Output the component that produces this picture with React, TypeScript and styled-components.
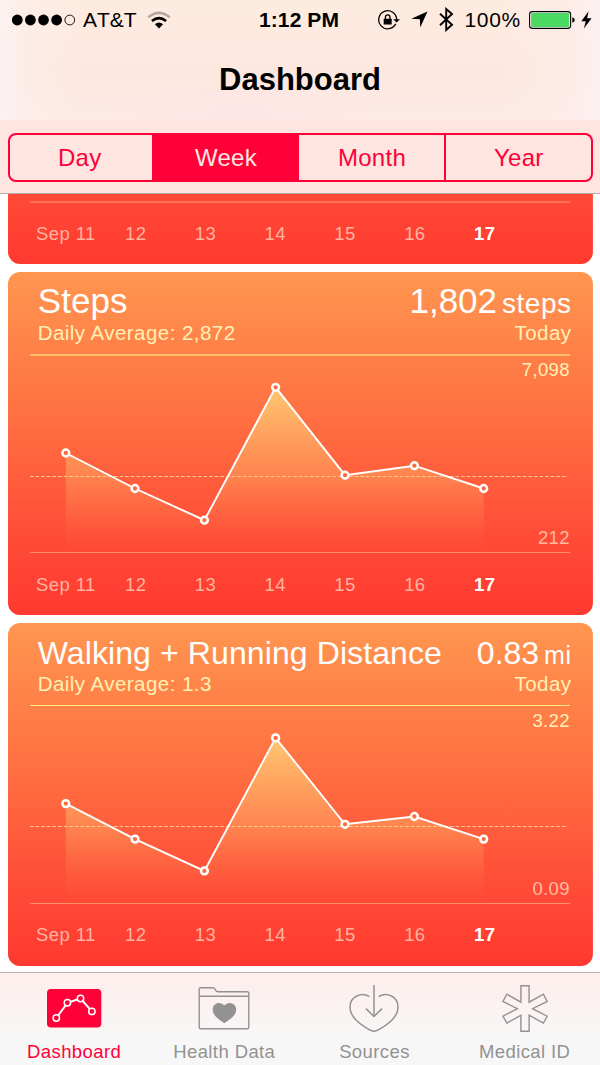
import React from 'react';
import styled, { createGlobalStyle } from 'styled-components';

const GlobalStyle = createGlobalStyle`
  * { box-sizing: border-box; }
  html, body { margin: 0; padding: 0; background: #fff; }
  body { font-family: "Liberation Sans", Arial, Helvetica, sans-serif; }
`;

const RED = '#ff0038';
const GRAY = '#929292';

const Screen = styled.div`
  width: 600px;
  height: 1065px;
  display: flex;
  flex-direction: column;
  overflow: hidden;
  background: #fff;
`;

const Header = styled.header`
  flex: none;
  height: 120px;
  background:
    radial-gradient(ellipse 130px 45px at 240px 115px, rgba(253, 226, 230, 0.6), rgba(253, 226, 230, 0)),
    linear-gradient(90deg, #fbf2f2 0, rgba(252, 240, 238, 0.45) 28px, rgba(253, 236, 230, 0) 80px, rgba(253, 236, 230, 0) 500px, rgba(252, 238, 236, 0.5) 565px, #fbf0f1 598px),
    linear-gradient(180deg, #feebdf 0, #fde8df 60%, #feeae6 100%);
`;

const StatusBar = styled.div`
  height: 39px;
  display: grid;
  grid-template-columns: 259px auto 1fr;
  align-items: center;
  padding: 0 8px 0 0;
  font-size: 21px;
  line-height: 39px;
  color: #000;
`;

const StatusGroup = styled.div<{ $end?: boolean }>`
  display: flex;
  align-items: center;
  justify-content: ${(p) => (p.$end ? 'flex-end' : 'flex-start')};
  padding-left: ${(p) => (p.$end ? 0 : 12)}px;
  svg { display: block; flex: none; }
`;

const Carrier = styled.span`
  margin: 0 10px 0 8px;
  font-kerning: none;
`;

const Clock = styled.span`
  font-weight: 700;
  letter-spacing: 0.1px;
`;

const Percent = styled.span`
  margin: 0 8px 0 10px;
  letter-spacing: 0.7px;
`;

const Title = styled.h1`
  margin: 0;
  font-size: 31px;
  font-weight: 700;
  line-height: 81px;
  text-align: center;
  color: #000;
`;

const Toolbar = styled.div`
  flex: none;
  height: 74px;
  padding: 13px 7.5px 0 7.5px;
  background: #fee5e0;
  border-bottom: 1px solid #b5aeae;
`;

const Segments = styled.div`
  height: 49px;
  display: grid;
  grid-template-columns: 142.5px 147px 145px 1fr;
  border: 2px solid ${RED};
  border-radius: 8px;
  overflow: hidden;
`;

const Segment = styled.button<{ $active?: boolean; $divided?: boolean }>`
  appearance: none;
  margin: 0;
  padding: 0 0 0 1px;
  border: 0;
  border-left: ${(p) => (p.$divided ? `2px solid ${RED}` : '0')};
  background: ${(p) => (p.$active ? RED : 'transparent')};
  color: ${(p) => (p.$active ? '#fee5e0' : RED)};
  font: 24px "Liberation Sans", Arial, sans-serif;
  letter-spacing: 0.3px;

  &:first-child { padding: 0 2px 0 0; }
`;

const Feed = styled.main`
  flex: none;
  height: 778px;
  display: flex;
  flex-direction: column;
  gap: 8px;
  padding: 0 7.5px 0 7.7px;
`;

const Card = styled.section<{ $scrolled?: boolean }>`
  flex: none;
  height: ${(p) => (p.$scrolled ? '70px' : '343px')};
  display: flex;
  flex-direction: column;
  justify-content: flex-end;
  border-radius: ${(p) => (p.$scrolled ? '0 0 12px 12px' : '12px')};
  background: linear-gradient(180deg, #ff9650 0, #ff683f 50%, #ff4c37 77%, #ff392f 100%) bottom / 100% 343px no-repeat;
`;

const CardHead = styled.div`
  height: 82px;
  padding: 9px 21px 0 30px;
`;

const HeadRow = styled.div<{ $compact?: boolean }>`
  display: flex;
  justify-content: space-between;
  height: 40px;
  line-height: ${(p) => (p.$compact ? 42 : 40)}px;
  font-size: ${(p) => (p.$compact ? 32 : 35)}px;
  color: #fff;
  white-space: nowrap;
`;

const Metric = styled.span`
  letter-spacing: 0.1px;
`;

const Reading = styled.span``;

const Unit = styled.span<{ $compact?: boolean }>`
  margin-left: 5px;
  font-size: ${(p) => (p.$compact ? 25 : 28)}px;
  letter-spacing: 0.5px;
`;

const SubRow = styled.div`
  display: flex;
  justify-content: space-between;
  height: 25px;
  line-height: 23px;
  font-size: 20.5px;
  letter-spacing: 0.45px;
  color: #fff0b4;
`;

const PlotArea = styled.div<{ $thin?: boolean }>`
  display: grid;
  height: 198px;
  margin: 0 22.5px 0 22.3px;
  border-top: ${(p) => (p.$thin ? '1px solid #ffea80' : '2px solid #ffc068')};
  > * {
    grid-area: 1 / 1;
    margin-top: ${(p) => (p.$thin ? 0 : -1)}px;
  }
`;

const Plot = styled.svg`
  display: block;
  width: 540px;
  height: 197px;
  overflow: visible;
`;

const Range = styled.div`
  display: flex;
  flex-direction: column;
  justify-content: space-between;
  align-items: flex-end;
  padding: 5px 0 4px;
  font-size: 18.5px;
  line-height: 20px;
  letter-spacing: 0.4px;
`;

const RangeValue = styled.span<{ $low?: boolean }>`
  color: ${(p) => (p.$low ? '#ffbb9e' : '#fff0b4')};
`;

const Axis = styled.div<{ $faint?: boolean; $raised?: boolean }>`
  height: 63px;
  margin: 0 22.5px 0 22.3px;
  padding: 0 50px 0 1px;
  display: grid;
  grid-template-columns: repeat(7, 69.8px);
  border-top: ${(p) => (p.$faint ? '2px solid #ff7150' : '1px solid #ff9468')};
  line-height: ${(p) => (p.$faint || p.$raised ? 62 : 64)}px;
  font-size: 18.5px;
  letter-spacing: 0.45px;
  text-align: center;
  color: #ffb3a0;
`;

const AxisDay = styled.span<{ $today?: boolean }>`
  height: 60px;
  font-weight: ${(p) => (p.$today ? 700 : 400)};
  color: ${(p) => (p.$today ? '#fff' : 'inherit')};
  white-space: nowrap;
`;

const TabBar = styled.nav`
  flex: 1;
  display: grid;
  grid-template-columns: repeat(4, 150.2px);
  padding-right: 1px;
  margin-left: -1px;
  border-top: 1px solid #b5b3b3;
  background: linear-gradient(180deg, #fdeeec 0, #fbf2f1 35%, #f8f7f7 70%);
`;

const Tab = styled.a<{ $active?: boolean }>`
  display: flex;
  flex-direction: column;
  align-items: center;
  padding-top: 9px;
  font-size: 18.5px;
  line-height: 22px;
  letter-spacing: 0.4px;
  color: ${(p) => (p.$active ? RED : GRAY)};
  svg { display: block; margin-bottom: 5px; }
`;

const days = ['Sep 11', '12', '13', '14', '15', '16', '17'];

type Point = [number, number];

const stepPoints: Point[] = [
  [35.8, 98],
  [105, 133.5],
  [174.4, 165.2],
  [245.6, 32.3],
  [315, 120.2],
  [384.4, 110.7],
  [453.7, 133.5],
];

const distancePoints: Point[] = [
  [35.8, 97.6],
  [105, 133.1],
  [174.4, 164.9],
  [245.6, 31.9],
  [315, 118.3],
  [384.4, 110.5],
  [453.7, 133.1],
];

const SignalDots = () => (
  <svg width="63" height="12" viewBox="0 0 63 12">
    {[5.3, 18.4, 31.5, 44.6].map((x) => (
      <circle key={x} cx={x} cy="6" r="5.4" />
    ))}
    <circle cx="57.8" cy="6" r="4.9" fill="none" stroke="#000" strokeWidth="0.9" />
  </svg>
);

const Wifi = () => (
  <svg width="24" height="18" viewBox="0 0 24 18">
    <path d="M1.3 6.2Q12 -2.5 22.7 6.2" fill="none" stroke="#b3a8a1" strokeWidth="2.5" />
    <path d="M4.9 10Q12 4.2 19.1 10" fill="none" stroke="#000" strokeWidth="2.5" />
    <path d="M7.9 13.2Q12 9.8 16.1 13.2L12 17.4Z" />
  </svg>
);

const RotationLock = () => (
  <svg width="22" height="20" viewBox="0 0 22 20">
    <path d="M17.7 13.9A9 9 0 1 1 18.7 9.5" fill="none" stroke="#000" strokeWidth="1.3" />
    <path d="M15.2 9.2H22L18.6 12.6Z" />
    <rect x="5.7" y="8.8" width="8" height="5.8" rx="0.5" />
    <path d="M7.4 9V7.2A2.3 2.3 0 0 1 12 7.2V9" fill="none" stroke="#000" strokeWidth="1.3" />
  </svg>
);

const LocationArrow = () => (
  <svg width="17" height="17" viewBox="0 0 17 17">
    <path d="M16.5 0.5L9.2 16.6L8.9 8.3L0.3 7.8Z" />
  </svg>
);

const Bluetooth = () => (
  <svg width="15" height="25" viewBox="0 0 15 25">
    <path d="M1 6.7L13 17.8L7.2 23V2L13 7L1 18.3" fill="none" stroke="#000" strokeWidth="1.9" />
  </svg>
);

const Battery = () => (
  <svg width="46" height="18" viewBox="0 0 46 18">
    <rect x="0.6" y="0.6" width="41" height="16.8" rx="2.8" fill="#fff" fillOpacity="0.5" stroke="#000" strokeWidth="1.1" />
    <rect x="2.1" y="2.1" width="38" height="13.8" rx="1.2" fill="#4cd964" />
    <path d="M43.3 6.2Q45.8 6.7 45.8 9T43.3 11.8Z" />
  </svg>
);

const Bolt = () => (
  <svg width="11" height="18" viewBox="0 0 11 18">
    <path d="M7.6 0.3L0.3 10.2H4.7L2.9 17.6L10.6 7.2H6.1Z" />
  </svg>
);

const DashboardIcon = () => (
  <svg width="56" height="54" viewBox="0 0 56 54">
    <rect x="1" y="7" width="54.3" height="38.5" rx="4" fill={RED} />
    <path d="M10.3 36L21.4 20.8L34.5 16.5L45.9 29.4" fill="none" stroke="#fff" strokeWidth="2" />
    <g fill={RED} stroke="#fff" strokeWidth="1.5">
      <circle cx="10.3" cy="36" r="3.2" />
      <circle cx="21.4" cy="20.8" r="3.2" />
      <circle cx="34.5" cy="16.5" r="3.2" />
      <circle cx="45.9" cy="29.4" r="3.2" />
    </g>
  </svg>
);

const FolderIcon = () => (
  <svg width="56" height="54" viewBox="0 0 56 54">
    <g fill="none" stroke={GRAY} strokeWidth="1.4">
      <path d="M3.2 45.3V7.5Q3.2 5.7 5 5.7H16.7Q18.1 5.7 18.8 6.9L19.9 8.6Q20.6 9.7 22 9.7H51Q52.8 9.7 52.8 11.5V45.3Q52.8 46.8 51.3 46.8H4.7Q3.2 46.8 3.2 45.3Z" />
      <path d="M3.2 14.2H52.8" />
    </g>
    <path d="M28.3 41.2C21 36.6 16.7 32.6 16.7 27.4C16.7 20.8 24.7 18.9 28.3 23.6C32 18.9 40.2 20.8 40.2 27.4C40.2 32.6 35.8 36.6 28.3 41.2Z" fill={GRAY} />
  </svg>
);

const SourcesIcon = () => (
  <svg width="56" height="54" viewBox="0 0 56 54">
    <g fill="none" stroke={GRAY} strokeWidth="1.5">
      <path d="M23.4 14.6C15.5 9.7 4 14.4 4 25.1C4 35.3 14 42.2 23.7 47.9Q28 50.4 32.3 47.9C42 42.2 52 35.3 52 25.1C52 14.4 41 9.7 32.6 14.6" />
      <path d="M28 3V34.5" />
      <path d="M20 26.6L28 34.5L36 26.6" />
    </g>
  </svg>
);

const MedicalIcon = () => (
  <svg width="56" height="54" viewBox="0 0 56 54">
    <path
      d="M23.9 3.7H32.1V20.2L46.4 12.2L50.2 19.4L35.6 26.7L50.2 34.2L46.4 41.1L32.1 33.2V49.3H23.9V33.2L9.9 41.1L5.9 34.2L20.4 26.7L5.9 19.4L9.9 12.2L23.9 20.2Z"
      fill="none"
      stroke={GRAY}
      strokeWidth="1.4"
    />
  </svg>
);

const DateAxis = ({ faint, raised }: { faint?: boolean; raised?: boolean }) => (
  <Axis $faint={faint} $raised={raised}>
    {days.map((day) => (
      <AxisDay key={day} $today={day === '17'}>
        {day}
      </AxisDay>
    ))}
  </Axis>
);

const Chart = ({ id, points, average }: { id: string; points: Point[]; average: number }) => {
  const line = points.map(([x, y]) => `${x} ${y}`).join('L');
  return (
    <Plot viewBox="0 0 540 197">
      <defs>
        <linearGradient id={id} gradientUnits="userSpaceOnUse" x1="0" y1="32" x2="0" y2="197">
          <stop offset="0" stopColor="#ffc873" />
          <stop offset="0.55" stopColor="#ff9b5c" stopOpacity="0.6" />
          <stop offset="1" stopColor="#ff6a40" stopOpacity="0" />
        </linearGradient>
      </defs>
      <path d={`M${line}L453.7 197L35.8 197Z`} fill={`url(#${id})`} />
      <path d={`M0 ${average}H538`} stroke="#ffc98c" strokeWidth="1" strokeDasharray="3.7 1.9" />
      <path d={`M${line}`} fill="none" stroke="#fff" strokeWidth="1.9" />
      {points.map(([x, y]) => (
        <circle key={x} cx={x} cy={y} r="3.4" fill="#ff6a40" stroke="#fff" strokeWidth="2.5" />
      ))}
    </Plot>
  );
};

interface MetricCardProps {
  id: string;
  name: string;
  compact?: boolean;
  value: string;
  unit: string;
  average: string;
  high: string;
  low: string;
  points: Point[];
  averageLine: number;
}

const MetricCard = ({ id, name, compact, value, unit, average, high, low, points, averageLine }: MetricCardProps) => (
  <Card>
    <CardHead>
      <HeadRow $compact={compact}>
        <Metric>{name}</Metric>
        <Reading>
          {value}
          <Unit $compact={compact}>{unit}</Unit>
        </Reading>
      </HeadRow>
      <SubRow>
        <span>Daily Average: {average}</span>
        <span>Today</span>
      </SubRow>
    </CardHead>
    <PlotArea $thin={compact}>
      <Chart id={id} points={points} average={averageLine} />
      <Range>
        <RangeValue>{high}</RangeValue>
        <RangeValue $low>{low}</RangeValue>
      </Range>
    </PlotArea>
    <DateAxis raised={compact} />
  </Card>
);

const Spacer = styled.span<{ $w: number }>`
  flex: none;
  width: ${(p) => p.$w}px;
`;

export default function App() {
  return (
    <>
      <GlobalStyle />
      <Screen>
        <Header>
          <StatusBar>
            <StatusGroup>
              <SignalDots />
              <Carrier>AT&amp;T</Carrier>
              <Wifi />
            </StatusGroup>
            <Clock>1:12 PM</Clock>
            <StatusGroup $end>
              <RotationLock />
              <Spacer $w={11} />
              <LocationArrow />
              <Spacer $w={11} />
              <Bluetooth />
              <Percent>100%</Percent>
              <Battery />
              <Spacer $w={6} />
              <Bolt />
            </StatusGroup>
          </StatusBar>
          <Title>Dashboard</Title>
        </Header>
        <Toolbar>
          <Segments>
            <Segment>Day</Segment>
            <Segment $active>Week</Segment>
            <Segment>Month</Segment>
            <Segment $divided>Year</Segment>
          </Segments>
        </Toolbar>
        <Feed>
          <Card $scrolled>
            <DateAxis faint />
          </Card>
          <MetricCard
            id="steps"
            name="Steps"
            value="1,802"
            unit="steps"
            average="2,872"
            high="7,098"
            low="212"
            points={stepPoints}
            averageLine={121.5}
          />
          <MetricCard
            id="distance"
            name="Walking + Running Distance"
            compact
            value="0.83"
            unit="mi"
            average="1.3"
            high="3.22"
            low="0.09"
            points={distancePoints}
            averageLine={120.5}
          />
        </Feed>
        <TabBar>
          <Tab $active>
            <DashboardIcon />
            Dashboard
          </Tab>
          <Tab>
            <FolderIcon />
            Health Data
          </Tab>
          <Tab>
            <SourcesIcon />
            Sources
          </Tab>
          <Tab>
            <MedicalIcon />
            Medical ID
          </Tab>
        </TabBar>
      </Screen>
    </>
  );
}
